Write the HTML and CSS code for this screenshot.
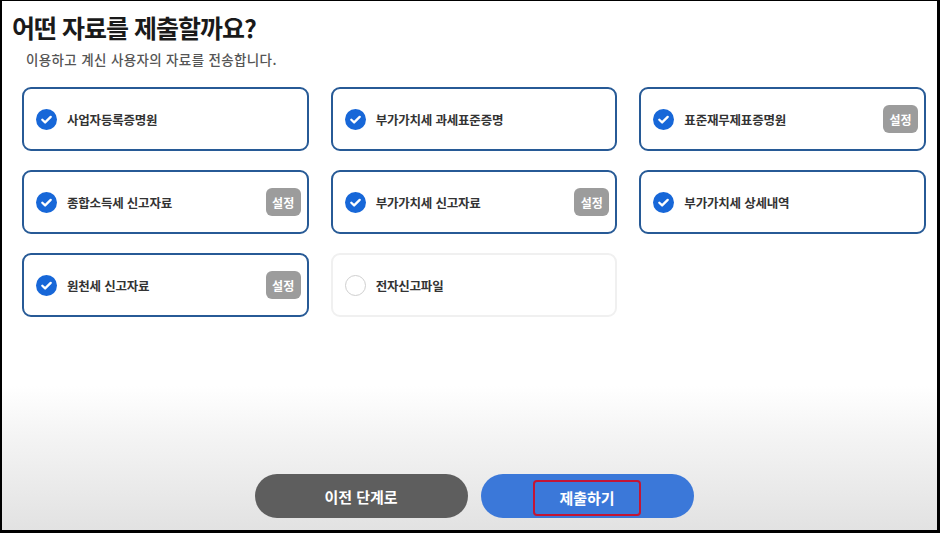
FILE: index.html
```html
<!DOCTYPE html>
<html lang="ko">
<head>
<meta charset="utf-8">
<title>자료 제출</title>
<link rel="stylesheet" href="styles.css">
</head>
<body>
<div class="frame">
  <h1 class="title">어떤 자료를 제출할까요?</h1>
  <p class="subtitle">이용하고 계신 사용자의 자료를 전송합니다.</p>
  <div class="grid">
    <div class="card checked">
      <span class="check"><svg viewBox="0 0 20 20"><path d="M6 10.2l2.7 2.6 5.3-5.3"/></svg></span>
      <span class="label">사업자등록증명원</span>
    </div>
    <div class="card checked">
      <span class="check"><svg viewBox="0 0 20 20"><path d="M6 10.2l2.7 2.6 5.3-5.3"/></svg></span>
      <span class="label">부가가치세 과세표준증명</span>
    </div>
    <div class="card checked">
      <span class="check"><svg viewBox="0 0 20 20"><path d="M6 10.2l2.7 2.6 5.3-5.3"/></svg></span>
      <span class="label">표준재무제표증명원</span>
      <span class="setting">설정</span>
    </div>
    <div class="card checked">
      <span class="check"><svg viewBox="0 0 20 20"><path d="M6 10.2l2.7 2.6 5.3-5.3"/></svg></span>
      <span class="label">종합소득세 신고자료</span>
      <span class="setting">설정</span>
    </div>
    <div class="card checked">
      <span class="check"><svg viewBox="0 0 20 20"><path d="M6 10.2l2.7 2.6 5.3-5.3"/></svg></span>
      <span class="label">부가가치세 신고자료</span>
      <span class="setting">설정</span>
    </div>
    <div class="card checked">
      <span class="check"><svg viewBox="0 0 20 20"><path d="M6 10.2l2.7 2.6 5.3-5.3"/></svg></span>
      <span class="label">부가가치세 상세내역</span>
    </div>
    <div class="card checked">
      <span class="check"><svg viewBox="0 0 20 20"><path d="M6 10.2l2.7 2.6 5.3-5.3"/></svg></span>
      <span class="label">원천세 신고자료</span>
      <span class="setting">설정</span>
    </div>
    <div class="card">
      <span class="radio"></span>
      <span class="label">전자신고파일</span>
    </div>
  </div>
  <div class="footer">
    <button class="btn prev">이전 단계로</button>
    <button class="btn submit"><span class="mark">제출하기</span></button>
  </div>
</div>
</body>
</html>
```
FILE: styles.css
```css
* { box-sizing: border-box; }
html, body { margin: 0; padding: 0; }
body {
  width: 940px;
  height: 533px;
  font-family: "Noto Sans CJK KR", "Noto Sans", sans-serif;
  background: #000;
}
.frame {
  width: 940px;
  height: 533px;
  border-style: solid;
  border-color: #000;
  border-width: 1px 3px 3px 2px;
  background: linear-gradient(to bottom, #ffffff 0, #ffffff 385px, #f3f3f3 440px, #e2e2e2 100%);
  padding: 10px 11px 12px 10px;
  display: flex;
  flex-direction: column;
}
.title {
  margin: 0;
  font-size: 25px;
  line-height: 32px;
  font-weight: 700;
  color: #1a1a1a;
  letter-spacing: -1px;
}
.subtitle {
  margin: 7px 0 0 14px;
  font-size: 13.5px;
  line-height: 18px;
  color: #555;
  font-weight: 500;
  letter-spacing: 0.35px;
}
.grid {
  margin: 19px 0 0 10px;
  display: grid;
  grid-template-columns: repeat(3, 1fr);
  grid-auto-rows: 64px;
  column-gap: 22px;
  row-gap: 19px;
}
.card {
  display: flex;
  align-items: center;
  border: 2px solid #f0f0f0;
  border-radius: 9px;
  padding: 0 6px 0 12px;
  background: #fff;
}
.card.checked {
  border-color: #275a96;
}
.check, .radio {
  width: 21px;
  height: 21px;
  border-radius: 50%;
  flex: none;
  margin-right: 10px;
}
.check {
  background: #1767d8;
  display: flex;
}
.check svg {
  width: 21px;
  height: 21px;
  fill: none;
  stroke: #fff;
  stroke-width: 2.2;
  stroke-linecap: round;
  stroke-linejoin: round;
}
.radio {
  border: 1px solid #cfcfcf;
  background: #fff;
}
.label {
  flex: 1;
  font-size: 12.5px;
  font-weight: 600;
  color: #333;
  letter-spacing: -0.2px;
}
.setting {
  flex: none;
  width: 35px;
  height: 28px;
  border-radius: 6px;
  background: #9c9c9c;
  color: #fff;
  font-size: 12px;
  font-weight: 600;
  display: flex;
  align-items: center;
  justify-content: center;
}
.footer {
  margin-top: auto;
  display: flex;
  justify-content: center;
  gap: 13px;
  padding-left: 10px;
}
.btn {
  width: 213px;
  height: 44px;
  border: none;
  border-radius: 22px;
  color: #fff;
  font-family: "Noto Sans CJK KR", "Noto Sans", sans-serif;
  font-size: 15px;
  font-weight: 700;
  display: flex;
  align-items: center;
  justify-content: center;
  padding: 0;
}
.prev { background: #5e5e5e; }
.submit { background: #3b78d9; }
.mark {
  width: 108px;
  height: 36px;
  border: 2px solid #c41534;
  border-radius: 4px;
  display: flex;
  align-items: center;
  justify-content: center;
  margin-top: 3px;
}
```
